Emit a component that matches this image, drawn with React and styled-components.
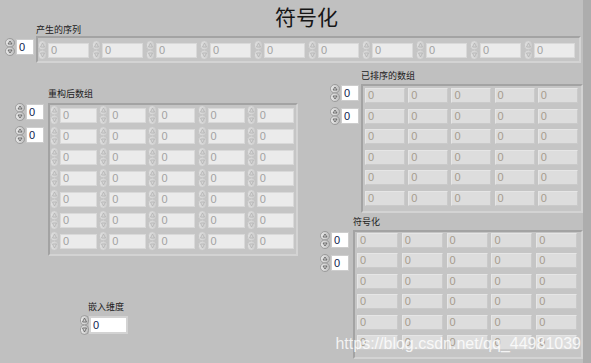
import React from 'react';
import styled, { createGlobalStyle } from 'styled-components';

const GlobalStyle = createGlobalStyle`
  html, body {
    margin: 0;
    padding: 0;
    background: #c0c0c0;
  }
  body {
    font-family: "Liberation Sans", "Noto Sans CJK SC", sans-serif;
  }
`;

const Panel = styled.div`
  position: relative;
  width: 583px;
  height: 363px;
  background: #c0c0c0;
  border-right: 8px solid #adadad;
  overflow: hidden;
`;

const Title = styled.h1`
  height: 25px;
  box-sizing: border-box;
  margin: 0;
  padding: 6px 0 0 30px;
  text-align: center;
  font: 400 21px/21px "Noto Sans CJK SC", sans-serif;
  color: #161616;
`;

const Body = styled.div`
  display: flex;
`;

const Column = styled.div`
  display: flex;
  flex-direction: column;
  align-items: flex-start;
  width: ${(p) => (p.$w ? `${p.$w}px` : 'auto')};
  flex: ${(p) => (p.$w ? 'none' : '1')};
`;

const ArrayBlock = styled.section`
  display: grid;
  grid-template-columns: 29px auto;
  grid-template-areas: ". label" "index frame";
  column-gap: ${(p) => p.$gap}px;
  align-items: start;
  justify-content: start;
  margin: ${(p) => p.$mt}px 0 0 ${(p) => p.$ml}px;
`;

const Label = styled.div`
  grid-area: label;
  margin-bottom: ${(p) => p.$mb}px;
  font: 400 9px/10px "Noto Sans CJK SC", sans-serif;
  color: #1c1c1c;
  white-space: nowrap;
`;

const IndexStack = styled.div`
  grid-area: index;
  display: flex;
  flex-direction: column;
  gap: 5px;
  margin-top: ${(p) => p.$top}px;
`;

const IndexControl = styled.div`
  display: flex;
  align-items: center;
  gap: 1px;
  height: 18px;
`;

const IndexBox = styled.div`
  width: 18px;
  height: 16px;
  box-sizing: border-box;
  padding-left: 2px;
  background: #ffffff;
  border: 1px solid #cdcdcd;
  font: 400 11px/14px "Liberation Sans", sans-serif;
  color: #0e1a4e;
`;

const Frame = styled.div`
  grid-area: frame;
  display: grid;
  grid-template-columns: repeat(${(p) => p.$cols}, ${(p) => p.$cellW}px);
  grid-auto-rows: ${(p) => p.$cellH}px;
  padding: ${(p) => p.$pad};
  background: #c5c5c5;
  border-top: 2px solid #a3a3a3;
  border-left: 2px solid #a3a3a3;
  border-right: 2px solid #d3d3d3;
  border-bottom: 2px solid #d3d3d3;
`;

const ControlCell = styled.div`
  display: flex;
  align-items: center;
  gap: 1px;
  height: 20px;
`;

const ValueBox = styled.div`
  width: ${(p) => p.$w}px;
  height: 15px;
  box-sizing: border-box;
  padding-left: 2px;
  background: #ebebeb;
  border: 1px solid #d9d9d9;
  font: 400 11px/13px "Liberation Sans", sans-serif;
  color: #a2a2a2;
`;

const IndicatorBox = styled.div`
  width: ${(p) => p.$w}px;
  height: 15px;
  box-sizing: border-box;
  padding-left: 2px;
  background: #dddddd;
  border-top: 1px solid #e6e6e6;
  border-left: 1px solid #e6e6e6;
  border-right: 1px solid #cacaca;
  border-bottom: 1px solid #cacaca;
  font: 400 11px/13px "Liberation Sans", sans-serif;
  color: #a69c8e;
`;

const NumericBlock = styled.section`
  display: flex;
  flex-direction: column;
  margin: 46px 0 0 80px;
`;

const NumericLabel = styled.div`
  padding-left: 8px;
  margin-bottom: 3px;
  font: 400 9px/10px "Noto Sans CJK SC", sans-serif;
  color: #1c1c1c;
`;

const NumericRow = styled.div`
  display: flex;
  align-items: center;
  gap: 0;
`;

const NumericBox = styled.div`
  width: 39px;
  height: 18px;
  box-sizing: border-box;
  padding-left: 2px;
  background: #ffffff;
  border: 2px solid #d3d3d3;
  font: 400 11px/14px "Liberation Sans", sans-serif;
  color: #0e1a4e;
`;

const Watermark = styled.div`
  position: absolute;
  right: 2px;
  top: 335px;
  font: 400 16px/18px "Liberation Sans", sans-serif;
  color: rgba(255, 255, 255, 0.82);
  white-space: nowrap;
  pointer-events: none;
`;

const SpinSvg = styled.svg`
  display: block;
  flex: none;
`;

function Spinner({ w = 9, h = 20, muted = false }) {
  const stroke = muted ? '#c2c2c2' : '#8f8f8f';
  const arrow = muted ? '#b3b3b3' : '#5c5c5c';
  const grad = muted ? 'spinMuted' : 'spinLive';
  const half = h / 2;
  const cx = w / 2;
  return (
    <SpinSvg width={w} height={h} viewBox={`0 0 ${w} ${h}`}>
      <defs>
        <linearGradient id={grad} x1="0" y1="0" x2="1" y2="0">
          <stop offset="0" stopColor={muted ? '#e0e0e0' : '#ececec'} />
          <stop offset="1" stopColor={muted ? '#cdcdcd' : '#bdbdbd'} />
        </linearGradient>
      </defs>
      <rect x="0.5" y="0.5" width={w - 1} height={half - 0.5} rx={cx - 0.5} fill={`url(#${grad})`} stroke={stroke} strokeWidth="0.8" />
      <rect x="0.5" y={half} width={w - 1} height={half - 0.5} rx={cx - 0.5} fill={`url(#${grad})`} stroke={stroke} strokeWidth="0.8" />
      <path d={`M${cx - 2} ${half - 3} L${cx} ${3} L${cx + 2} ${half - 3} Z`} fill="none" stroke={arrow} strokeWidth="0.8" />
      <path d={`M${cx - 2} ${half + 3} L${cx} ${h - 3} L${cx + 2} ${half + 3} Z`} fill="none" stroke={arrow} strokeWidth="0.8" />
    </SpinSvg>
  );
}

function NumArray({
  label, rows, cols, cellW, cellH, pad, boxW, kind, indexCount,
  mt, ml, gap, labelGap, indexTop,
}) {
  const cells = Array.from({ length: rows * cols }, (_, i) => i);
  return (
    <ArrayBlock $mt={mt} $ml={ml} $gap={gap}>
      <Label $mb={labelGap}>{label}</Label>
      <IndexStack $top={indexTop}>
        {Array.from({ length: indexCount }, (_, i) => (
          <IndexControl key={i}>
            <Spinner w={10} h={18} />
            <IndexBox>0</IndexBox>
          </IndexControl>
        ))}
      </IndexStack>
      <Frame $cols={cols} $cellW={cellW} $cellH={cellH} $pad={pad}>
        {cells.map((i) => (kind === 'control' ? (
          <ControlCell key={i}>
            <Spinner muted />
            <ValueBox $w={boxW}>0</ValueBox>
          </ControlCell>
        ) : (
          <div key={i}>
            <IndicatorBox $w={boxW}>0</IndicatorBox>
          </div>
        )))}
      </Frame>
    </ArrayBlock>
  );
}

export default function App() {
  return (
    <Panel>
      <GlobalStyle />
      <Title>符号化</Title>
      <NumArray
        label="产生的序列"
        rows={1}
        cols={10}
        cellW={54}
        cellH={20}
        pad="2px 1px 1px 0"
        boxW={41}
        kind="control"
        indexCount={1}
        mt={0}
        ml={5}
        gap={2}
        labelGap={1}
        indexTop={2}
      />
      <Body>
        <Column $w={320}>
          <NumArray
            label="重构后数组"
            rows={7}
            cols={5}
            cellW={49.2}
            cellH={21}
            pad="0 0 2px 0"
            boxW={37}
            kind="control"
            indexCount={2}
            mt={26}
            ml={15}
            gap={4}
            labelGap={4}
            indexTop={0}
          />
          <NumericBlock>
            <NumericLabel>嵌入维度</NumericLabel>
            <NumericRow>
              <Spinner w={9} h={20} />
              <NumericBox>0</NumericBox>
            </NumericRow>
          </NumericBlock>
        </Column>
        <Column>
          <NumArray
            label="已排序的数组"
            rows={6}
            cols={5}
            cellW={43.2}
            cellH={20.5}
            pad="2px 0 0 2px"
            boxW={40}
            kind="indicator"
            indexCount={2}
            mt={8}
            ml={10}
            gap={2}
            labelGap={3}
            indexTop={0}
          />
          <NumArray
            label="符号化"
            rows={6}
            cols={5}
            cellW={44.8}
            cellH={20.4}
            pad="1px 0 2px 2px"
            boxW={41}
            kind="indicator"
            indexCount={2}
            mt={4}
            ml={0}
            gap={4}
            labelGap={3}
            indexTop={1}
          />
        </Column>
      </Body>
      <Watermark>https://blog.csdn.net/qq_44981039</Watermark>
    </Panel>
  );
}
